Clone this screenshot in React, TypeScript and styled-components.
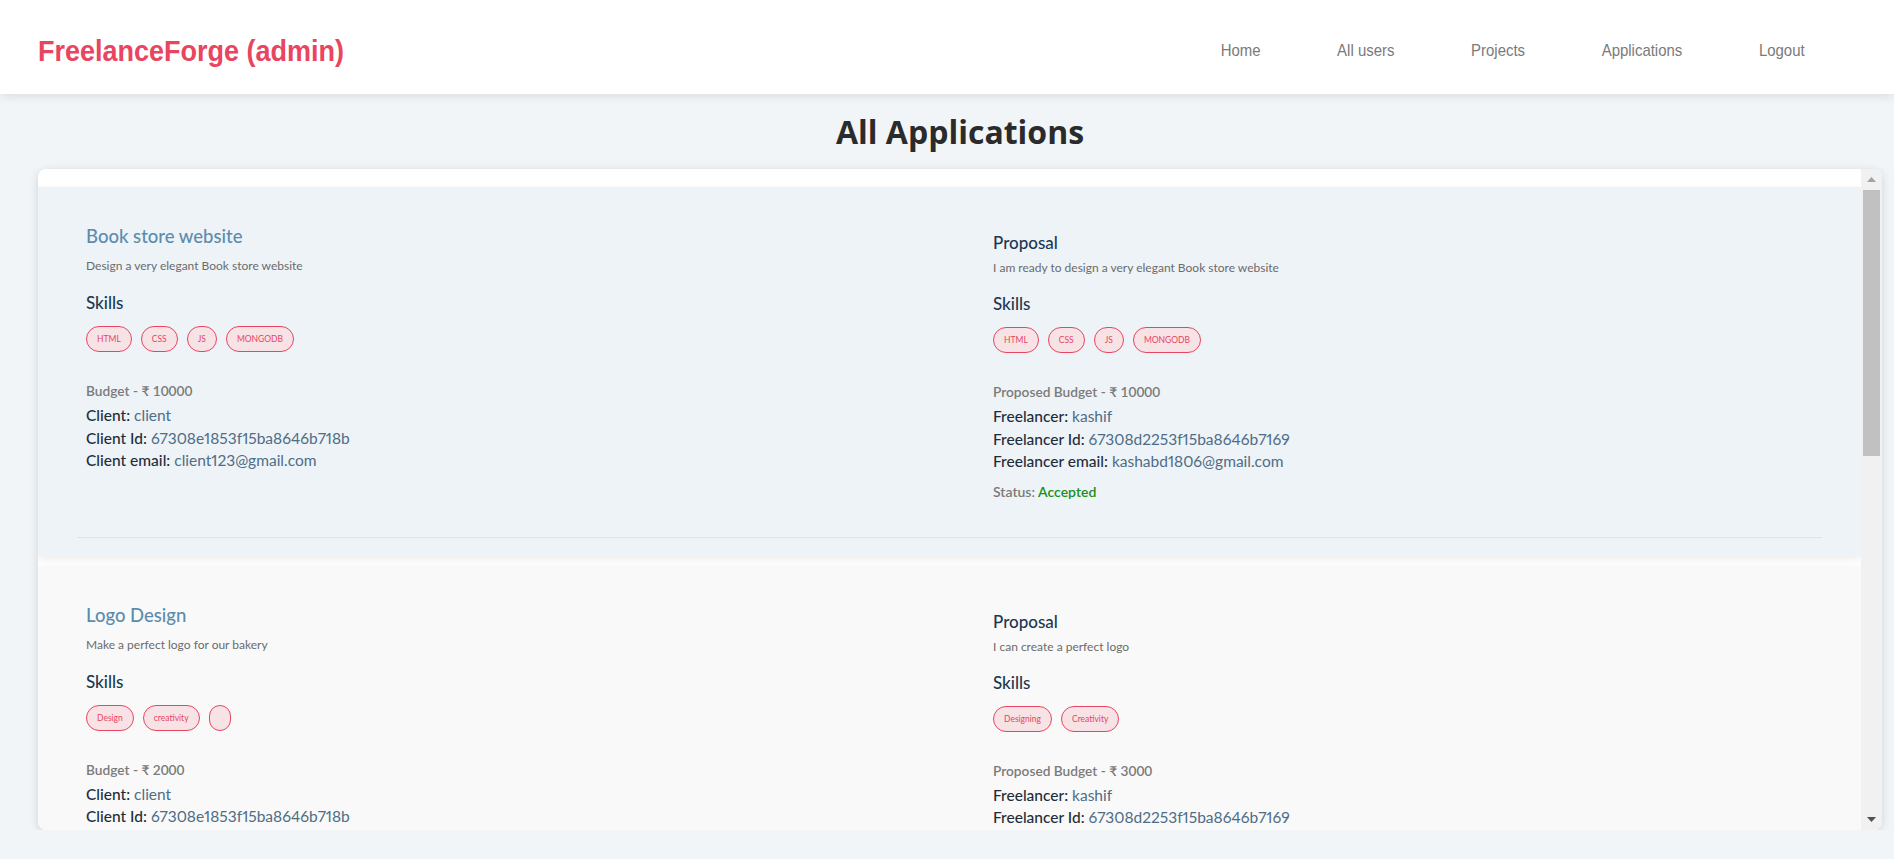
import React from 'react';
import styled, { createGlobalStyle } from 'styled-components';

const GlobalStyle = createGlobalStyle`
  html, body {
    margin: 0;
    padding: 0;
  }
  body {
    background: #f1f5f8;
    font-family: Lato, "Noto Sans", "DejaVu Sans", sans-serif;
  }
  * {
    box-sizing: border-box;
  }
`;

const Header = styled.header`
  position: relative;
  z-index: 1;
  height: 94px;
  padding: 8px 89px 0 38px;
  display: flex;
  align-items: center;
  justify-content: space-between;
  background: #fff;
  box-shadow: 0 2px 10px rgba(0, 0, 0, 0.1);
`;

const Logo = styled.h2`
  margin: 0;
  font-family: "Liberation Sans", Arial, sans-serif;
  font-size: 30px;
  font-weight: 700;
  color: #e94560;
  white-space: nowrap;
  transform: scaleX(0.9);
  transform-origin: left center;
`;

const Nav = styled.nav`
  display: flex;
  gap: 87px;
  transform: scaleX(0.88);
  transform-origin: right center;
`;

const NavLink = styled.a`
  font-family: "Liberation Sans", Arial, sans-serif;
  font-size: 17px;
  color: #7a7a7a;
  text-decoration: none;
  white-space: nowrap;
  cursor: pointer;
`;

const Main = styled.main`
  padding: 0 12px 0 38px;
`;

const PageTitle = styled.h1`
  margin: 16px 0 15px;
  font-family: "Open Sans", "Noto Sans", sans-serif;
  font-size: 32px;
  font-weight: 700;
  line-height: 44px;
  color: #2b2b2b;
  text-align: center;
`;

const Board = styled.section`
  height: 661px;
  display: flex;
  overflow: hidden;
  background: #fff;
  border-radius: 8px;
  box-shadow: 0 2px 10px rgba(0, 0, 0, 0.14);
`;

const Scroller = styled.div`
  flex: 1;
  min-width: 0;
  overflow-y: auto;
  scrollbar-width: none;
`;

const Rail = styled.div`
  width: 21px;
  flex-shrink: 0;
  display: flex;
  flex-direction: column;
  background: #f1f1f1;
`;

const RailButton = styled.div`
  height: 21px;
  display: flex;
  align-items: center;
  justify-content: center;
`;

const RailTrack = styled.div`
  flex: 1;
  padding: 0 2px;
`;

const Thumb = styled.div`
  height: 266px;
  background: #c1c1c1;
`;

const List = styled.div`
  display: flex;
  flex-direction: column;
  gap: 10px;
  padding-top: 18px;
`;

const Card = styled.article<{ $tint: boolean }>`
  padding: 37px 39px 18px;
  background: ${(p) => (p.$tint ? '#eef3f7' : '#f9f9f9')};
  box-shadow: 0 3px 8px rgba(0, 0, 0, 0.08);
`;

const Columns = styled.div`
  display: grid;
  grid-template-columns: 1fr 1fr;
  column-gap: 87px;
  padding: 0 9px;
`;

const Column = styled.div`
  display: flex;
  flex-direction: column;
  align-items: flex-start;
`;

const ProjectTitle = styled.h3`
  margin: 0;
  font-size: 18.5px;
  font-weight: 500;
  line-height: 24px;
  color: #5b8cad;
`;

const Heading = styled.h4<{ $mt: number }>`
  margin: ${(p) => p.$mt}px 0 0;
  font-size: 17px;
  font-weight: 500;
  line-height: 22px;
  color: #1c3850;
`;

const Desc = styled.p<{ $mt: number }>`
  margin: ${(p) => p.$mt}px 0 0;
  font-size: 12px;
  line-height: 16px;
  color: #6b6b6b;
`;

const Pills = styled.div`
  display: flex;
  gap: 9px;
  margin-top: 12px;
`;

const Pill = styled.span`
  height: 26px;
  min-width: 22px;
  padding: 0 10px;
  display: inline-flex;
  align-items: center;
  border: 1px solid #e94560;
  border-radius: 13px;
  background: #f7e2e6;
  font-size: 8.5px;
  color: #e94560;
`;

const Budget = styled.p`
  margin: 29px 0 0;
  font-size: 13.7px;
  font-weight: 600;
  line-height: 20px;
  color: #7b7b7b;
`;

const InfoList = styled.div`
  margin-top: 3px;
`;

const Info = styled.div`
  font-size: 15.5px;
  line-height: 22.5px;
  color: #4e6d86;
  white-space: nowrap;
  font-variant-numeric: proportional-nums;
`;

const Label = styled.span`
  font-weight: 500;
  color: #1f2d3a;
`;

const Status = styled.p`
  margin: 9px 0 0;
  font-size: 14px;
  font-weight: 600;
  line-height: 20px;
  color: #7b7b7b;
`;

const StatusValue = styled.span<{ $status: string }>`
  color: ${(p) =>
    p.$status === 'Accepted' ? '#1a8f1a' : p.$status === 'Rejected' ? '#d93a3a' : '#c98a00'};
`;

const Divider = styled.hr`
  margin: 35px 0 0;
  border: none;
  border-top: 1px solid #dde3e8;
`;

interface Application {
  id: number;
  title: string;
  description: string;
  skills: string[];
  budget: number;
  client: string;
  clientId: string;
  clientEmail: string;
  proposal: string;
  freelancerSkills: string[];
  proposedBudget: number;
  freelancer: string;
  freelancerId: string;
  freelancerEmail: string;
  status: string;
}

const applications: Application[] = [
  {
    id: 1,
    title: 'Book store website',
    description: 'Design a very elegant Book store website',
    skills: ['HTML', 'CSS', 'JS', 'MONGODB'],
    budget: 10000,
    client: 'client',
    clientId: '67308e1853f15ba8646b718b',
    clientEmail: 'client123@gmail.com',
    proposal: 'I am ready to design a very elegant Book store website',
    freelancerSkills: ['HTML', 'CSS', 'JS', 'MONGODB'],
    proposedBudget: 10000,
    freelancer: 'kashif',
    freelancerId: '67308d2253f15ba8646b7169',
    freelancerEmail: 'kashabd1806@gmail.com',
    status: 'Accepted',
  },
  {
    id: 2,
    title: 'Logo Design',
    description: 'Make a perfect logo for our bakery',
    skills: ['Design', 'creativity', ''],
    budget: 2000,
    client: 'client',
    clientId: '67308e1853f15ba8646b718b',
    clientEmail: 'client123@gmail.com',
    proposal: 'I can create a perfect logo',
    freelancerSkills: ['Designing', 'Creativity'],
    proposedBudget: 3000,
    freelancer: 'kashif',
    freelancerId: '67308d2253f15ba8646b7169',
    freelancerEmail: 'kashabd1806@gmail.com',
    status: 'Accepted',
  },
  {
    id: 3,
    title: 'Portfolio website',
    description: 'Build a personal portfolio website with a contact form',
    skills: ['HTML', 'CSS', 'REACT'],
    budget: 5000,
    client: 'client',
    clientId: '67308e1853f15ba8646b718b',
    clientEmail: 'client123@gmail.com',
    proposal: 'I can build a clean and responsive portfolio',
    freelancerSkills: ['HTML', 'CSS', 'REACT'],
    proposedBudget: 4500,
    freelancer: 'kashif',
    freelancerId: '67308d2253f15ba8646b7169',
    freelancerEmail: 'kashabd1806@gmail.com',
    status: 'Pending',
  },
];

const navItems = ['Home', 'All users', 'Projects', 'Applications', 'Logout'];

const Arrow = ({ up, color }: { up: boolean; color: string }) => (
  <svg width="9" height="5" viewBox="0 0 9 5">
    <path d={up ? 'M4.5 0L9 5H0z' : 'M0 0H9L4.5 5z'} fill={color} />
  </svg>
);

const App = () => {
  return (
    <>
      <GlobalStyle />
      <Header>
        <Logo>FreelanceForge (admin)</Logo>
        <Nav>
          {navItems.map((item) => (
            <NavLink key={item}>{item}</NavLink>
          ))}
        </Nav>
      </Header>
      <Main>
        <PageTitle>All Applications</PageTitle>
        <Board>
          <Scroller>
            <List>
              {applications.map((app, i) => (
                <Card key={app.id} $tint={i % 2 === 0}>
                  <Columns>
                    <Column>
                      <ProjectTitle>{app.title}</ProjectTitle>
                      <Desc $mt={10}>{app.description}</Desc>
                      <Heading $mt={18}>Skills</Heading>
                      <Pills>
                        {app.skills.map((s, k) => (
                          <Pill key={k}>{s}</Pill>
                        ))}
                      </Pills>
                      <Budget>Budget - ₹ {app.budget}</Budget>
                      <InfoList>
                        <Info>
                          <Label>Client:</Label> {app.client}
                        </Info>
                        <Info>
                          <Label>Client Id:</Label> {app.clientId}
                        </Info>
                        <Info>
                          <Label>Client email:</Label> {app.clientEmail}
                        </Info>
                      </InfoList>
                    </Column>
                    <Column>
                      <Heading $mt={8}>Proposal</Heading>
                      <Desc $mt={6}>{app.proposal}</Desc>
                      <Heading $mt={17}>Skills</Heading>
                      <Pills>
                        {app.freelancerSkills.map((s, k) => (
                          <Pill key={k}>{s}</Pill>
                        ))}
                      </Pills>
                      <Budget>Proposed Budget - ₹ {app.proposedBudget}</Budget>
                      <InfoList>
                        <Info>
                          <Label>Freelancer:</Label> {app.freelancer}
                        </Info>
                        <Info>
                          <Label>Freelancer Id:</Label> {app.freelancerId}
                        </Info>
                        <Info>
                          <Label>Freelancer email:</Label> {app.freelancerEmail}
                        </Info>
                      </InfoList>
                      <Status>
                        Status: <StatusValue $status={app.status}>{app.status}</StatusValue>
                      </Status>
                    </Column>
                  </Columns>
                  <Divider />
                </Card>
              ))}
            </List>
          </Scroller>
          <Rail>
            <RailButton>
              <Arrow up color="#a3a3a3" />
            </RailButton>
            <RailTrack>
              <Thumb />
            </RailTrack>
            <RailButton>
              <Arrow up={false} color="#505050" />
            </RailButton>
          </Rail>
        </Board>
      </Main>
    </>
  );
};

export default App;
